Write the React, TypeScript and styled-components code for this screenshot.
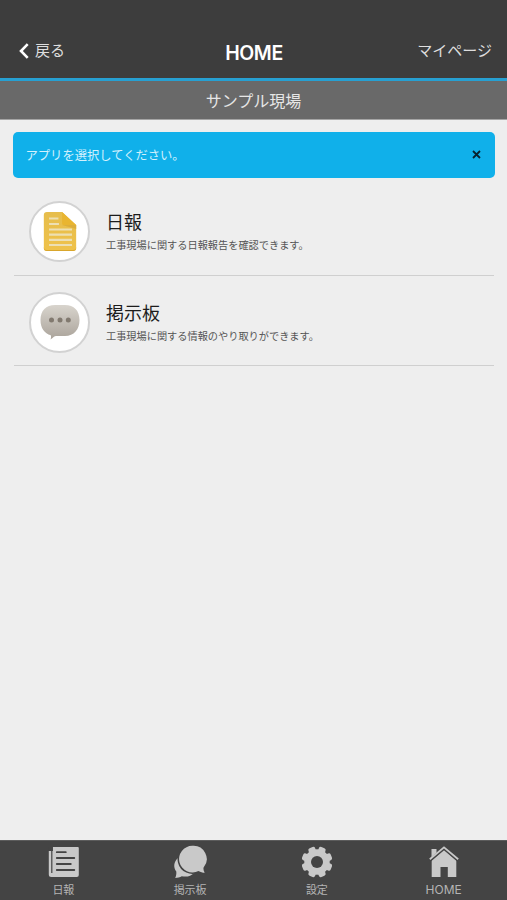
import React from "react";
import styled, { createGlobalStyle } from "styled-components";

const GlobalStyle = createGlobalStyle`
  *, *::before, *::after { box-sizing: border-box; }
  body {
    margin: 0;
    background: #eeeeee;
    font-family: Inter, "Noto Sans CJK JP", sans-serif;
  }
  button { font: inherit; border: 0; background: none; padding: 0; }
  h1, h2, p, ul { margin: 0; padding: 0; font-weight: 400; }
`;

const Screen = styled.div`
  display: flex;
  flex-direction: column;
  height: 900px;
  width: 100%;
  background: #eeeeee;
  overflow: hidden;
`;

const Header = styled.header`
  display: grid;
  grid-template-columns: 1fr auto 1fr;
  align-items: center;
  height: 81px;
  padding: 24px 15px 0 19px;
  background: #3d3d3d;
  border-bottom: 3px solid #27a0d2;
`;

const HeaderLink = styled.button<{ $end?: boolean }>`
  display: flex;
  align-items: center;
  justify-self: ${(p) => (p.$end ? "end" : "start")};
  gap: 6px;
  height: 24px;
  font-size: 15px;
  line-height: 24px;
  color: #dedede;
`;

const Title = styled.h1`
  font-size: 19.5px;
  font-weight: 600;
  line-height: 24px;
  letter-spacing: -0.4px;
  color: #ffffff;
  padding: 4px 3px 0 0;
`;

const SiteBar = styled.div`
  height: 39px;
  line-height: 41px;
  text-align: center;
  font-size: 16px;
  color: #e6e6e6;
  background: #696969;
  border-bottom: 1px solid #a5a5a5;
`;

const Main = styled.main`
  flex: 1;
  padding: 12px 12.5px 0 13px;
`;

const Notice = styled.div`
  display: flex;
  align-items: center;
  justify-content: space-between;
  height: 46px;
  padding: 0 13.5px 0 12.5px;
  border-radius: 5px;
  background: #10b0ea;
  color: #d3f1fd;
  font-size: 12.3px;
`;

const CloseButton = styled.button`
  display: flex;
  padding-bottom: 1px;
  color: #08222e;
`;

const AppList = styled.ul`
  list-style: none;
  padding: 7px 1px 0 1px;
`;

const AppRow = styled.li`
  display: flex;
  gap: 16px;
  height: 90.5px;
  padding: 16px 0 0 15px;
  border-bottom: 1.5px solid #cfcfcf;
`;

const IconDisc = styled.div`
  display: flex;
  align-items: center;
  justify-content: center;
  flex: none;
  width: 61px;
  height: 61px;
  border-radius: 50%;
  border: 2px solid #d2d2d2;
  background: #ffffff;
`;

const AppText = styled.div`
  padding-top: 8px;
`;

const AppName = styled.h2`
  font-size: 18px;
  line-height: 27px;
  color: #1c1c1c;
`;

const AppNote = styled.p`
  font-size: 10.2px;
  line-height: 16px;
  margin-top: 1px;
  color: #555555;
`;

const TabBar = styled.nav`
  display: grid;
  grid-template-columns: repeat(4, 1fr);
  height: 60px;
  background: #444444;
  border-top: 1px solid #5c5c5c;
`;

const Tab = styled.button`
  display: flex;
  flex-direction: column;
  align-items: center;
  padding-top: 4px;
  color: #c9c9c9;
`;

const TabLabel = styled.span<{ $latin?: boolean }>`
  font-size: ${(p) => (p.$latin ? "12px" : "11px")};
  line-height: 16px;
  margin-top: 3px;
  color: #b4b4b4;
`;

const BackIcon = () => (
  <svg width="10" height="16" viewBox="0 0 10 16" fill="none" stroke="#fff" strokeWidth="2.6">
    <path d="M8.7 1.2 2 8l6.7 6.8" />
  </svg>
);

const CloseIcon = () => (
  <svg width="9" height="9" viewBox="0 0 9 9" stroke="currentColor" strokeWidth="1.8">
    <path d="M1 1l7 7M8 1L1 8" />
  </svg>
);

const DocumentIcon = () => (
  <svg width="34" height="41" viewBox="0.2 0 32.6 41" preserveAspectRatio="none">
    <defs>
      <linearGradient id="paper" x1="0" y1="0" x2="0" y2="1">
        <stop offset="0" stopColor="#e6bd4c" />
        <stop offset="1" stopColor="#efc24a" />
      </linearGradient>
    </defs>
    <path d="M4 1h14.5L32 14v23a3 3 0 0 1-3 3H4a3 3 0 0 1-3-3V4a3 3 0 0 1 3-3z" fill="url(#paper)" />
    <path d="M1 36v1a3 3 0 0 0 3 3h25a3 3 0 0 0 3-3v-1a3 3 0 0 1-3 3H4a3 3 0 0 1-3-3z" fill="#d9a62c" />
    <path d="M18.5 14 32 14v4z" fill="#dcae3c" />
    <path d="M18.5 1 32 14H20a1.5 1.5 0 0 1-1.5-1.5z" fill="#e9b530" />
    <path
      d="M6 7.500h9M6 13h9.500M6 18.500h22M6 23.700h22M6 28.900h22M6 34h22"
      stroke="#eddfb2"
      strokeWidth="2.2"
    />
  </svg>
);

const BubbleIcon = () => (
  <svg width="40" height="36" viewBox="0 0 40 36">
    <defs>
      <linearGradient id="bubble" x1="0" y1="0" x2="0" y2="1">
        <stop offset="0" stopColor="#d8d4cd" />
        <stop offset="1" stopColor="#aaa39a" />
      </linearGradient>
    </defs>
    <path
      d="M15 1h10c9 0 14.500 5.500 14.500 15S34 32 25 32H16c-1.500 0-3 1.700-5.500 3.500.7-1.800.6-2.800.3-4.300C4.500 29.500.5 24 .5 16 .5 6.500 6 1 15 1z"
      fill="url(#bubble)"
    />
    <circle cx="11.500" cy="16" r="2.500" fill="#81796f" />
    <circle cx="20" cy="16" r="2.500" fill="#81796f" />
    <circle cx="28.300" cy="16" r="2.500" fill="#81796f" />
  </svg>
);

const ReportTabIcon = () => (
  <svg width="32" height="34" viewBox="-0.8 0 32 34">
    <path
      d="M5 2h25a1 1 0 0 1 1 1v27a2 2 0 0 1-2 2H3.500A2.500 2.500 0 0 1 1 29.500V6h4z"
      fill="currentColor"
    />
    <path d="M4 5.500v22.500" stroke="#444444" strokeWidth="1.200" />
    <path d="M1 2h4v4H1z" fill="#444444" />
    <path
      d="M9 7.200h9M9 13h17.500M9 19h14M9 25h17.500"
      stroke="#444444"
      strokeWidth="1.800"
      strokeLinecap="round"
    />
  </svg>
);

const ChatTabIcon = () => (
  <svg width="34" height="34" viewBox="0 0 34 34">
    <path
      d="M5 13C.5 17 .2 22.500 3.300 26.500c.2 2.300-.1 4.500-1.100 6.500 2.500-.1 4.600-.8 6.600-1.800 4.600 1 9.200.2 12.200-3.200z"
      fill="currentColor"
    />
    <path
      d="M19.300.8a13.300 13.300 0 1 0 6.200 25.100c2 1.100 4.100 1.800 6.200 1.900-1.100-1.700-1.500-3.600-1.100-5.200A13.300 13.300 0 0 0 19.300.8z"
      fill="currentColor"
      stroke="#444444"
      strokeWidth="3"
      paintOrder="stroke"
    />
  </svg>
);

const GEAR_ANGLES = [0, 45, 90, 135];

const GearTabIcon = () => (
  <svg width="34" height="34" viewBox="0 0 34 34">
    <g fill="currentColor" transform="rotate(22.5 17 17)">
      <circle cx="17" cy="17" r="12.7" />
      {GEAR_ANGLES.map((angle) => (
        <rect
          key={angle}
          x="13.4"
          y="1.5"
          width="7.2"
          height="31"
          rx="2"
          transform={`rotate(${angle} 17 17)`}
        />
      ))}
    </g>
    <circle cx="17" cy="17" r="6" fill="#444444" />
  </svg>
);

const HomeTabIcon = () => (
  <svg width="30" height="34" viewBox="0 0 30 34">
    <path d="M2.500 4h5v6l-5 5z" fill="currentColor" />
    <path d="M2.700 15.500 15 4.500l12.300 11V32H18.800V22H11.500V32H2.700z" fill="currentColor" />
    <path d="M.8 15.300 15 3.400l14.200 11.900" fill="none" stroke="#444444" strokeWidth="3" />
    <path d="M.8 14.200 15 2.300l14.200 11.900" fill="none" stroke="currentColor" strokeWidth="1.800" />
  </svg>
);

const apps = [
  { name: "日報", note: "工事現場に関する日報報告を確認できます。", Icon: DocumentIcon },
  { name: "掲示板", note: "工事現場に関する情報のやり取りができます。", Icon: BubbleIcon },
];

const tabs = [
  { label: "日報", Icon: ReportTabIcon },
  { label: "掲示板", Icon: ChatTabIcon },
  { label: "設定", Icon: GearTabIcon },
  { label: "HOME", Icon: HomeTabIcon, latin: true },
];

export default function App() {
  return (
    <>
      <GlobalStyle />
      <Screen>
        <Header>
          <HeaderLink>
            <BackIcon />
            戻る
          </HeaderLink>
          <Title>HOME</Title>
          <HeaderLink $end>マイページ</HeaderLink>
        </Header>
        <SiteBar>サンプル現場</SiteBar>
        <Main>
          <Notice>
            アプリを選択してください。
            <CloseButton aria-label="閉じる">
              <CloseIcon />
            </CloseButton>
          </Notice>
          <AppList>
            {apps.map(({ name, note, Icon }) => (
              <AppRow key={name}>
                <IconDisc>
                  <Icon />
                </IconDisc>
                <AppText>
                  <AppName>{name}</AppName>
                  <AppNote>{note}</AppNote>
                </AppText>
              </AppRow>
            ))}
          </AppList>
        </Main>
        <TabBar>
          {tabs.map(({ label, Icon, latin }) => (
            <Tab key={label}>
              <Icon />
              <TabLabel $latin={latin}>{label}</TabLabel>
            </Tab>
          ))}
        </TabBar>
      </Screen>
    </>
  );
}
